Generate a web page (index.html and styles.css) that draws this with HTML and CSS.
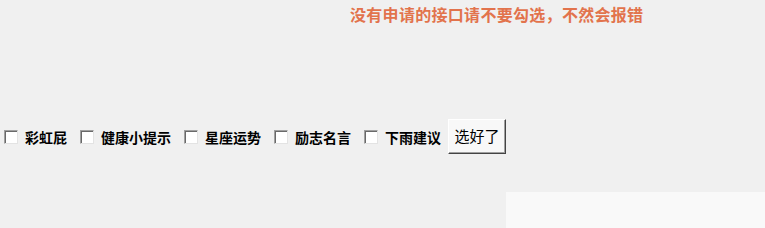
FILE: index.html
```html
<!DOCTYPE html>
<html lang="zh-CN">
<head>
    <meta charset="UTF-8">
    <meta name="viewport" content="width=device-width, initial-scale=1.0">
    <title>订阅选择</title>
    <link rel="stylesheet" href="styles.css">
</head>
<body>
    <!-- Warning -->
    <div class="notice">没有申请的接口请不要勾选，不然会报错</div>

    <!-- Options -->
    <form class="options">
        <label class="option"><input type="checkbox" name="api" value="caihongpi"><span>彩虹屁</span></label>
        <label class="option"><input type="checkbox" name="api" value="health"><span>健康小提示</span></label>
        <label class="option"><input type="checkbox" name="api" value="star"><span>星座运势</span></label>
        <label class="option"><input type="checkbox" name="api" value="lizhi"><span>励志名言</span></label>
        <label class="option"><input type="checkbox" name="api" value="rain"><span>下雨建议</span></label>
        <button type="button" class="submit">选好了</button>
    </form>

    <div class="panel"></div>
</body>
</html>
```

FILE: styles.css
```css
/* General */
body {
    font-family: "Noto Sans CJK SC", "Liberation Sans", sans-serif;
    background-color: #f0f0f0;
    color: #000000;
    margin: 0;
    padding: 0;
    overflow: hidden;
}

.notice {
    padding: 4px 0 0 350px;
    font-size: 16px;
    line-height: 20px;
    font-weight: bold;
    letter-spacing: 0.3px;
    color: #e2734c;
}

/* Checkbox row */
.options {
    display: flex;
    align-items: center;
    margin: 95px 0 0 4px;
    height: 35px;
}

.option {
    display: flex;
    align-items: center;
    margin-right: 13px;
    font-size: 14px;
    font-weight: bold;
}

.option input {
    appearance: none;
    box-sizing: border-box;
    width: 14px;
    height: 14px;
    margin: 0 7px 0 0;
    background: #ffffff;
    border: 1px solid;
    border-color: #a0a0a0 #e3e3e3 #e3e3e3 #a0a0a0;
    box-shadow: inset 1px 1px 0 #696969;
}

.submit {
    height: 35px;
    width: 58px;
    margin-left: -6px;
    padding: 0 0 2px;
    font-family: inherit;
    font-size: 15px;
    background: #f8f8f8;
    border: 1px solid;
    border-color: #ffffff #444444 #444444 #ffffff;
    box-shadow: inset -1px -1px 0 #a0a0a0;
}

.panel {
    margin: 38px 0 0 506px;
    height: 40px;
    background: #f9f9f9;
}
```
